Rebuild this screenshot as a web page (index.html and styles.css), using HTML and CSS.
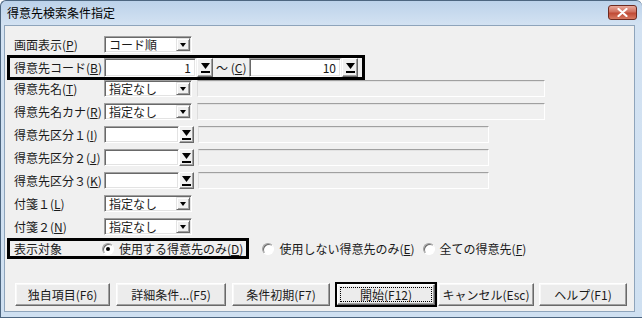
FILE: index.html
```html
<!DOCTYPE html>
<html lang="ja">
<head>
  <meta charset="UTF-8" />
  <title>得意先検索条件指定</title>
  <link rel="stylesheet" href="styles.css">
</head>
<body>
  <div class="window">
    <!-- TITLE BAR -->
    <div class="titlebar">
      <span class="title">得意先検索条件指定</span>
      <button class="close" aria-label="閉じる">
        <svg width="11" height="9" viewBox="0 0 11 9"><path d="M1.5 1L9.5 8M9.5 1L1.5 8" stroke="#fff" stroke-width="2.2" stroke-linecap="round"/></svg>
      </button>
    </div>

    <div class="frame-body">
      <div class="client">
        <!-- CONDITIONS -->
        <div class="form">
          <div class="row first">
            <span class="lbl">画面表示(<u>P</u>)</span>
            <div class="combo"><span class="val">コード順</span><span class="drop"></span></div>
          </div>

          <div class="row framed code">
            <span class="lbl">得意先コード(<u>B</u>)</span>
            <div class="field">1</div>
            <div class="pick"><svg width="9" height="10" viewBox="0 0 9 10"><path d="M0 0h9L4.5 6z"/><rect y="8" width="9" height="2"/></svg></div>
            <span class="tilde">～ (<u>C</u>)</span>
            <div class="field">10</div>
            <div class="pick"><svg width="9" height="10" viewBox="0 0 9 10"><path d="M0 0h9L4.5 6z"/><rect y="8" width="9" height="2"/></svg></div>
          </div>

          <div class="row after-frame">
            <span class="lbl">得意先名(<u>T</u>)</span>
            <div class="combo"><span class="val">指定なし</span><span class="drop"></span></div>
            <div class="disabled wide"></div>
          </div>

          <div class="row">
            <span class="lbl">得意先名カナ(<u>R</u>)</span>
            <div class="combo"><span class="val">指定なし</span><span class="drop"></span></div>
            <div class="disabled wide"></div>
          </div>

          <div class="row">
            <span class="lbl">得意先区分１(<u>I</u>)</span>
            <div class="field short"></div>
            <div class="pick short"><svg width="9" height="10" viewBox="0 0 9 10"><path d="M0 0h9L4.5 6z"/><rect y="8" width="9" height="2"/></svg></div>
            <div class="disabled narrow"></div>
          </div>

          <div class="row">
            <span class="lbl">得意先区分２(<u>J</u>)</span>
            <div class="field short"></div>
            <div class="pick short"><svg width="9" height="10" viewBox="0 0 9 10"><path d="M0 0h9L4.5 6z"/><rect y="8" width="9" height="2"/></svg></div>
            <div class="disabled narrow"></div>
          </div>

          <div class="row">
            <span class="lbl">得意先区分３(<u>K</u>)</span>
            <div class="field short"></div>
            <div class="pick short"><svg width="9" height="10" viewBox="0 0 9 10"><path d="M0 0h9L4.5 6z"/><rect y="8" width="9" height="2"/></svg></div>
            <div class="disabled narrow"></div>
          </div>

          <div class="row">
            <span class="lbl">付箋１(<u>L</u>)</span>
            <div class="combo"><span class="val">指定なし</span><span class="drop"></span></div>
          </div>

          <div class="row">
            <span class="lbl">付箋２(<u>N</u>)</span>
            <div class="combo"><span class="val">指定なし</span><span class="drop"></span></div>
          </div>

          <!-- DISPLAY TARGET -->
          <div class="choice">
            <div class="row framed target">
              <span class="lbl">表示対象</span>
              <label class="radio first-radio"><span class="dot on"></span>使用する得意先のみ(<u>D</u>)</label>
            </div>
            <label class="radio r2"><span class="dot"></span>使用しない得意先のみ(<u>E</u>)</label>
            <label class="radio r3"><span class="dot"></span>全ての得意先(<u>F</u>)</label>
          </div>
        </div>

        <!-- BUTTONS -->
        <div class="buttons">
          <button class="btn b1">独自項目(F6)</button>
          <button class="btn b2">詳細条件...(F5)</button>
          <button class="btn b3">条件初期(F7)</button>
          <div class="default"><button class="btn b4"><span class="focus">開始(F12)</span></button></div>
          <button class="btn b5">キャンセル(Esc)</button>
          <button class="btn b6">ヘルプ(F1)</button>
        </div>
      </div>
    </div>
  </div>
</body>
</html>
```

FILE: styles.css
```css
/* RESET & BASE */
* { margin:0; padding:0; box-sizing:border-box; }
html, body { width:642px; height:318px; overflow:hidden; }
body { font-family:"Noto Sans CJK JP", "Noto Sans", sans-serif; font-size:12px; color:#1a1a1a; background:#fff; }
u { text-decoration:underline; text-underline-offset:1px; }

/* WINDOW FRAME */
.window {
  width:642px; height:318px;
  border:1px solid #4d6680; border-right:none; border-radius:6px 6px 0 0;
  background:linear-gradient(#bcd2ea, #d3e2f2 24px, #cfe0f1);
  display:flex; flex-direction:column;
}
.titlebar { height:24px; flex:none; display:flex; align-items:flex-start; padding:0 5px 0 6px; }
.title { line-height:22px; margin-top:1px; color:#000; }
.close {
  margin-left:auto; margin-top:4px; width:29px; height:15px;
  border:1px solid #6e2a20; border-radius:3px;
  background:linear-gradient(#e9a99b, #d0705e 45%, #c04a35 55%, #d77a62);
  display:flex; align-items:center; justify-content:center;
}
.frame-body { flex:1; display:flex; padding:0 7px 5px 3px; }
.client {
  flex:1; background:#f0f0f0; border:1px solid #8ea4bb;
  display:flex; flex-direction:column;
}

/* FORM ROWS */
.form { display:flex; flex-direction:column; align-items:flex-start; padding-left:2px; }
.row {
  display:flex; align-items:center; height:17px; margin-top:6px;
  padding:0 4px; border:solid transparent; border-width:0 3px;
  white-space:nowrap;
}
.row.first { margin-top:10px; }
.row.framed { border:3px solid #000; }
.row.code { height:25px; margin-top:2px; }
.row.after-frame { margin-top:0; }
.lbl { width:90px; flex:none; }

/* CONTROLS */
.combo {
  display:flex; align-items:center; width:88px; height:17px; flex:none; padding:1px;
  background:#fff; border:1px solid; border-color:#a0a0a0 #fff #fff #a0a0a0;
  box-shadow:inset 1px 1px #696969, inset -1px -1px #e3e3e3;
}
.combo .val { flex:1; padding-left:3px; line-height:13px; white-space:nowrap; }
.combo .drop {
  width:14px; height:13px; flex:none; background:#f0f0f0;
  border:1px solid; border-color:#e3e3e3 #696969 #696969 #e3e3e3;
  box-shadow:inset 1px 1px #fff, inset -1px -1px #a0a0a0;
  display:flex; align-items:center; justify-content:center;
}
.combo .drop::before {
  content:''; border-style:solid; border-width:4px 3.5px 0; border-color:#000 transparent transparent;
}

.field {
  width:92px; height:19px; flex:none; padding:0 4px;
  background:#fff; border:1px solid; border-color:#a0a0a0 #fff #fff #a0a0a0;
  box-shadow:inset 1px 1px #696969, inset -1px -1px #e3e3e3;
  text-align:right; line-height:17px;
}
.field.short { width:75px; height:17px; }

.pick {
  width:16px; height:19px; flex:none; margin-left:1px; background:#f0f0f0;
  border:1px solid; border-color:#fff #696969 #696969 #fff;
  box-shadow:inset -1px -1px #a0a0a0;
  display:flex; align-items:center; justify-content:center;
}
.pick.short { width:15px; height:17px; margin-left:0; }
.pick svg { fill:#000; }
.tilde { width:36px; padding-left:3px; }

.disabled {
  height:17px; flex:none; background:#f0f0f0;
  border:1px solid; border-color:#a0a0a0 #fff #fff #dcdcdc;
  box-shadow:inset 0 1px #e3e3e3;
}
.disabled.wide { width:348px; margin-left:5px; }
.disabled.narrow { width:291px; margin-left:4px; }

/* RADIO GROUP */
.choice { display:flex; align-items:center; margin-top:3px; white-space:nowrap; }
.row.target { height:21px; margin-top:0; padding-right:3px; }
.radio { display:flex; align-items:center; }
.radio .dot {
  width:12px; height:12px; flex:none; margin-right:5px; border-radius:50%;
  background:#fff; border:1px solid; border-color:#a0a0a0 #fff #fff #a0a0a0;
  box-shadow:inset 1px 1px #696969;
  display:flex; align-items:center; justify-content:center;
}
.radio .dot.on::after { content:''; width:4px; height:4px; border-radius:50%; background:#000; }
.first-radio { margin-left:-2px; }
.r2 { margin-left:13px; }
.r3 { margin-left:8px; }

/* BUTTONS */
.buttons { display:flex; align-items:center; height:25px; margin-top:23px; padding-left:10px; }
.btn {
  height:23px; flex:none; margin-right:6px;
  font:inherit; color:#1a1a1a; background:#ececec;
  border:1px solid; border-color:#fff #696969 #696969 #fff;
  box-shadow:inset -1px -1px #a0a0a0, inset 1px 1px #f8f8f8;
}
.b1 { width:95px; }
.b2 { width:110px; }
.b3 { width:98px; margin-right:5px; }
.b5 { width:96px; margin-right:5px; }
.b6 { width:88px; }
.default { border:2px solid #000; height:25px; margin-right:1px; display:flex; }
.btn.b4 { width:98px; height:21px; margin:0; padding:2px; display:flex; }
.focus { flex:1; border:1px dotted #000; line-height:13px; }
```
